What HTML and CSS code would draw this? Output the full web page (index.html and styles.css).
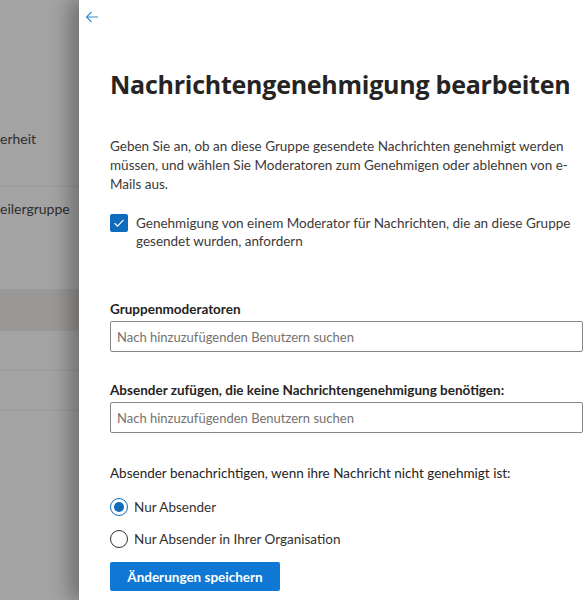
FILE: index.html
```html
<!DOCTYPE html>
<html lang="de">
<head>
    <meta charset="UTF-8">
    <meta name="viewport" content="width=device-width, initial-scale=1.0">
    <title>Nachrichtengenehmigung bearbeiten</title>
    <link rel="stylesheet" href="styles.css">
</head>
<body>
    <div class="page">
        <div class="backdrop">
            <div class="bg-row bg-row-first">erheit</div>
            <div class="bg-row bg-row-tall">eilergruppe</div>
            <div class="bg-row bg-row-active"></div>
            <div class="bg-row"></div>
            <div class="bg-row"></div>
        </div>

        <div class="panel">
            <button class="back-btn" aria-label="Zurück">
                <svg width="14" height="12" viewBox="0 0 14 12">
                    <path d="M13 6H1.5M6.5 1L1.5 6l5 5" fill="none" stroke="#2f8fc9" stroke-width="1.1"/>
                </svg>
            </button>

            <h1 class="title">Nachrichtengenehmigung bearbeiten</h1>

            <p class="intro">Geben Sie an, ob an diese Gruppe gesendete Nachrichten genehmigt werden müssen, und wählen Sie Moderatoren zum Genehmigen oder ablehnen von e-Mails aus.</p>

            <label class="check">
                <span class="check-box">
                    <svg width="12" height="10" viewBox="0 0 12 10">
                        <path d="M1.5 5.2l3 3 6-6.4" fill="none" stroke="#fff" stroke-width="1.2"/>
                    </svg>
                </span>
                <span class="check-text">Genehmigung von einem Moderator für Nachrichten, die an diese Gruppe gesendet wurden, anfordern</span>
            </label>

            <div class="field field-first">
                <label class="field-label" for="moderators">Gruppenmoderatoren</label>
                <input class="search" id="moderators" type="text" placeholder="Nach hinzuzufügenden Benutzern suchen">
            </div>

            <div class="field">
                <label class="field-label" for="senders">Absender zufügen, die keine Nachrichtengenehmigung benötigen:</label>
                <input class="search" id="senders" type="text" placeholder="Nach hinzuzufügenden Benutzern suchen">
            </div>

            <div class="notify">
                <div class="notify-label">Absender benachrichtigen, wenn ihre Nachricht nicht genehmigt ist:</div>
                <label class="radio">
                    <span class="radio-dot radio-on"></span>
                    Nur Absender
                </label>
                <label class="radio">
                    <span class="radio-dot"></span>
                    Nur Absender in Ihrer Organisation
                </label>
            </div>

            <button class="save-btn">Änderungen speichern</button>
        </div>
    </div>
</body>
</html>
```

FILE: styles.css
```css
body {
    margin: 0;
    padding: 0;
    font-family: Lato, "Open Sans", sans-serif;
    color: #323130;
    background: #fff;
    overflow: hidden;
}
.page {
    display: flex;
    height: 600px;
    width: 640px;
}
.backdrop {
    width: 79px;
    flex: none;
    background: #a3a3a3;
    display: flex;
    flex-direction: column;
    padding-top: 124px;
    overflow: hidden;
}
.bg-row {
    height: 39px;
    border-bottom: 1px solid #999;
    font-size: 14px;
    color: #2e2e2e;
    white-space: nowrap;
}
.bg-row-first {
    height: 63px;
    padding-top: 6px;
    box-sizing: border-box;
}
.bg-row-tall {
    height: 103px;
    padding-top: 13px;
    box-sizing: border-box;
}
.bg-row-active {
    height: 40px;
    background: #9a9896;
}
.panel {
    flex: 1;
    background: #fff;
    padding: 0 0 0 31px;
    box-shadow: -10px 0 18px rgba(0, 0, 0, 0.3);
    position: relative;
}
.back-btn {
    border: none;
    background: transparent;
    padding: 0;
    margin: 11px 0 0 -25px;
    cursor: pointer;
    display: block;
    height: 12px;
}
.title {
    font-family: "Open Sans", sans-serif;
    font-size: 25px;
    font-weight: 700;
    margin: 44px 0 0;
    line-height: 34px;
    letter-spacing: -0.25px;
    color: #252423;
}
.intro {
    font-size: 13.5px;
    line-height: 19px;
    margin: 36px 0 0;
    width: 474px;
    color: #3b3a39;
}
.check {
    display: flex;
    gap: 8px;
    margin-top: 20px;
    font-size: 13.5px;
    line-height: 18px;
    cursor: pointer;
}
.check-box {
    flex: none;
    width: 18px;
    height: 18px;
    background: #0f6cbd;
    border-radius: 2px;
    display: flex;
    align-items: center;
    justify-content: center;
}
.check-text {
    width: 440px;
    color: #3b3a39;
}
.field {
    margin-top: 29px;
}
.field-first {
    margin-top: 50px;
}
.field-label {
    display: block;
    font-size: 13.5px;
    font-weight: 700;
    line-height: 18px;
    color: #252423;
}
.search {
    display: block;
    box-sizing: border-box;
    width: 473px;
    height: 31px;
    margin-top: 3px;
    border: 1px solid #8a8886;
    border-radius: 2px;
    padding: 0 6px;
    font-family: inherit;
    font-size: 13px;
    outline: none;
}
.search::placeholder {
    color: #74726f;
}
.notify {
    margin-top: 31px;
}
.notify-label {
    font-size: 13.5px;
    line-height: 18px;
    color: #252423;
}
.radio {
    display: flex;
    align-items: center;
    gap: 6px;
    font-size: 13.5px;
    height: 20px;
    margin-top: 15px;
    cursor: pointer;
}
.radio + .radio {
    margin-top: 12px;
}
.radio-dot {
    width: 18px;
    height: 18px;
    border: 1px solid #323130;
    border-radius: 50%;
    box-sizing: border-box;
    position: relative;
}
.radio-on {
    border-color: #0f6cbd;
}
.radio-on::after {
    content: "";
    position: absolute;
    left: 3px;
    top: 3px;
    width: 10px;
    height: 10px;
    border-radius: 50%;
    background: #0f6cbd;
}
.save-btn {
    margin-top: 13px;
    width: 170px;
    height: 29px;
    border: none;
    border-radius: 2px;
    background: #0f78d4;
    color: #fff;
    font-family: inherit;
    font-size: 13.5px;
    font-weight: 700;
    cursor: pointer;
}
```
